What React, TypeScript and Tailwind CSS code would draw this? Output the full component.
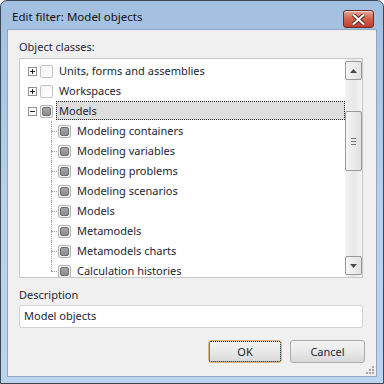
import React from "react";

const font = { fontFamily: '"Noto Sans", "Open Sans", sans-serif' };

function Expander({ open }: { open: boolean }) {
  return (
    <div className="relative w-[9px] h-[9px] border border-[#919191] bg-white shrink-0">
      <div className="absolute left-[1px] top-[3px] w-[5px] h-[1px] bg-[#222]" />
      {!open && <div className="absolute left-[3px] top-[1px] w-[1px] h-[5px] bg-[#222]" />}
    </div>
  );
}

function Check({ partial }: { partial: boolean }) {
  if (!partial) {
    return (
      <div className="w-[13px] h-[13px] rounded-[2px] border border-[#c2c2c2] bg-gradient-to-br from-[#f4f4f4] to-white shrink-0" />
    );
  }
  return (
    <div className="w-[13px] h-[13px] rounded-[2px] border border-[#b4b4b4] bg-[#f3f3f3] shrink-0 flex items-center justify-center">
      <div className="w-[9px] h-[9px] rounded-[2px] border border-[#6e6e6e] bg-gradient-to-b from-[#a4a4a4] to-[#8e8e8e]" />
    </div>
  );
}

const children = [
  "Modeling containers",
  "Modeling variables",
  "Modeling problems",
  "Modeling scenarios",
  "Models",
  "Metamodels",
  "Metamodels charts",
  "Calculation histories",
];

function ScrollBtn({ up }: { up: boolean }) {
  return (
    <div className="w-[17px] h-[19px] rounded-[2px] border border-[#9a9a9a] bg-gradient-to-r from-[#f6f6f6] to-[#e2e2e2] flex items-center justify-center">
      <svg width="7" height="4" viewBox="0 0 7 4">
        {up ? <path d="M0 4 L3.5 0 L7 4 Z" fill="#4a4a4a" /> : <path d="M0 0 L3.5 4 L7 0 Z" fill="#4a4a4a" />}
      </svg>
    </div>
  );
}

export default function App() {
  return (
    <div className="w-[384px] h-[384px] bg-white" style={font}>
      <div className="w-[384px] h-[384px] border border-[#3d4756] rounded-t-[7px] flex flex-col bg-gradient-to-b from-[#a2c0e1] via-[#b7cfea] to-[#bcd4ee] overflow-hidden">
        {/* title bar */}
        <div className="h-[28px] flex items-start relative shrink-0">
          <div className="absolute left-[11px] top-[8px] text-[11.5px] leading-[16px] text-[#111]">
            Edit filter: Model objects
          </div>
          <div className="absolute left-[342px] top-[9px] w-[31px] h-[18px] rounded-[3px] border border-[#6b2c25] bg-gradient-to-b from-[#e5a899] via-[#d0614b] to-[#c0402a] flex items-center justify-center shadow-[inset_0_1px_0_rgba(255,255,255,0.5)]">
            <svg width="13" height="11" viewBox="0 0 13 11">
              <path d="M1.5 1 L11.5 10 M11.5 1 L1.5 10" stroke="#5a2a24" strokeWidth="4" strokeLinecap="square" />
              <path d="M1.5 1 L11.5 10 M11.5 1 L1.5 10" stroke="#ffffff" strokeWidth="2" strokeLinecap="square" />
            </svg>
          </div>
        </div>
        {/* client */}
        <div className="mx-[6px] mb-[6px] flex-1 border border-[#8ea6c3] bg-[#f0f0f0] flex flex-col relative">
          <div className="pl-[11px] pr-[13px] pt-[9px] flex flex-col">
            <div className="text-[11px] leading-[16px] text-[#1d2535]">Object classes:</div>
            <div className="mt-[3px] h-[220px] border border-[#c8c8c8] bg-white flex">
              <div className="flex-1 pt-[2px] flex flex-col overflow-hidden text-[11px] text-[#1d2535]">
                {[
                  { label: "Units, forms and assemblies", open: false },
                  { label: "Workspaces", open: false },
                ].map((r) => (
                  <div key={r.label} className="h-[20px] shrink-0 flex items-center pl-[8px]">
                    <Expander open={r.open} />
                    <div className="w-[3px]" />
                    <Check partial={false} />
                    <span className="ml-[6px] leading-[16px]">{r.label}</span>
                  </div>
                ))}
                <div className="h-[20px] shrink-0 flex items-center pl-[8px]">
                  <Expander open={true} />
                  <div className="w-[3px]" />
                  <Check partial={true} />
                  <div className="ml-[3px] h-[19px] mt-[-1px] flex-1 bg-[#dedede] border border-dotted border-[#222] flex items-center pl-[2px]">
                    <span className="leading-[16px]">Models</span>
                  </div>
                </div>
                {children.map((c, i) => (
                  <div key={c} className="h-[20px] shrink-0 flex items-center relative pl-[38px]">
                    <div
                      className={
                        "absolute left-[31px] w-0 border-l border-dotted border-[#a0a0a0] " +
                        (i === children.length - 1 ? "top-0 h-[10px]" : "top-0 h-[20px]")
                      }
                    />
                    <div className="absolute left-[31px] top-[10px] w-[6px] border-t border-dotted border-[#a0a0a0]" />
                    <Check partial={true} />
                    <span className="ml-[6px] leading-[16px]">{c}</span>
                  </div>
                ))}
              </div>
              {/* scrollbar */}
              <div className="w-[17px] shrink-0 flex flex-col items-center py-[2px] bg-gradient-to-r from-[#f4f4f4] via-[#e8e8e8] to-[#f4f4f4]">
                <ScrollBtn up={true} />
                <div className="h-[31px]" />
                <div className="w-[17px] h-[60px] rounded-[2px] border border-[#9a9a9a] bg-gradient-to-r from-[#f6f6f6] to-[#e0e0e0] flex flex-col items-center justify-center gap-[2px]">
                  <div className="w-[5px] h-[1px] bg-[#777]" />
                  <div className="w-[5px] h-[1px] bg-[#777]" />
                  <div className="w-[5px] h-[1px] bg-[#777]" />
                </div>
                <div className="flex-1" />
                <ScrollBtn up={false} />
              </div>
            </div>
            <div className="mt-[9px] text-[11px] leading-[16px] text-[#1d2535]">Description</div>
            <div className="mt-[2px] h-[23px] rounded-[2px] border border-[#d2d2d2] bg-white flex items-center pl-[4px] text-[11px] text-[#1d2535]">
              Model objects
            </div>
          </div>
          <div className="mt-[12px] flex justify-end gap-[8px] pr-[11px] text-[11px] text-[#1d2535]">
            <div className="relative w-[74px] h-[23px] rounded-[3px] border border-[#d8b47c] bg-gradient-to-b from-[#f4f4f4] via-[#e9e9e9] to-[#d8d8d8] flex items-center justify-center">
              <div className="absolute inset-0 border border-dotted border-[#111] rounded-[2px]" />
              <span className="leading-[16px]">OK</span>
            </div>
            <div className="w-[75px] h-[23px] rounded-[3px] border border-[#acacac] bg-gradient-to-b from-[#f4f4f4] via-[#e9e9e9] to-[#d8d8d8] flex items-center justify-center">
              <span className="leading-[16px]">Cancel</span>
            </div>
          </div>
          {/* size grip */}
          <div className="absolute right-[2px] bottom-[2px] w-[8px] h-[8px] grid grid-cols-3 gap-[1px]">
            <div />
            <div />
            <div className="w-[2px] h-[2px] bg-[#a8a8a8]" />
            <div />
            <div className="w-[2px] h-[2px] bg-[#a8a8a8]" />
            <div className="w-[2px] h-[2px] bg-[#a8a8a8]" />
            <div className="w-[2px] h-[2px] bg-[#a8a8a8]" />
            <div className="w-[2px] h-[2px] bg-[#a8a8a8]" />
            <div className="w-[2px] h-[2px] bg-[#a8a8a8]" />
          </div>
        </div>
      </div>
    </div>
  );
}
